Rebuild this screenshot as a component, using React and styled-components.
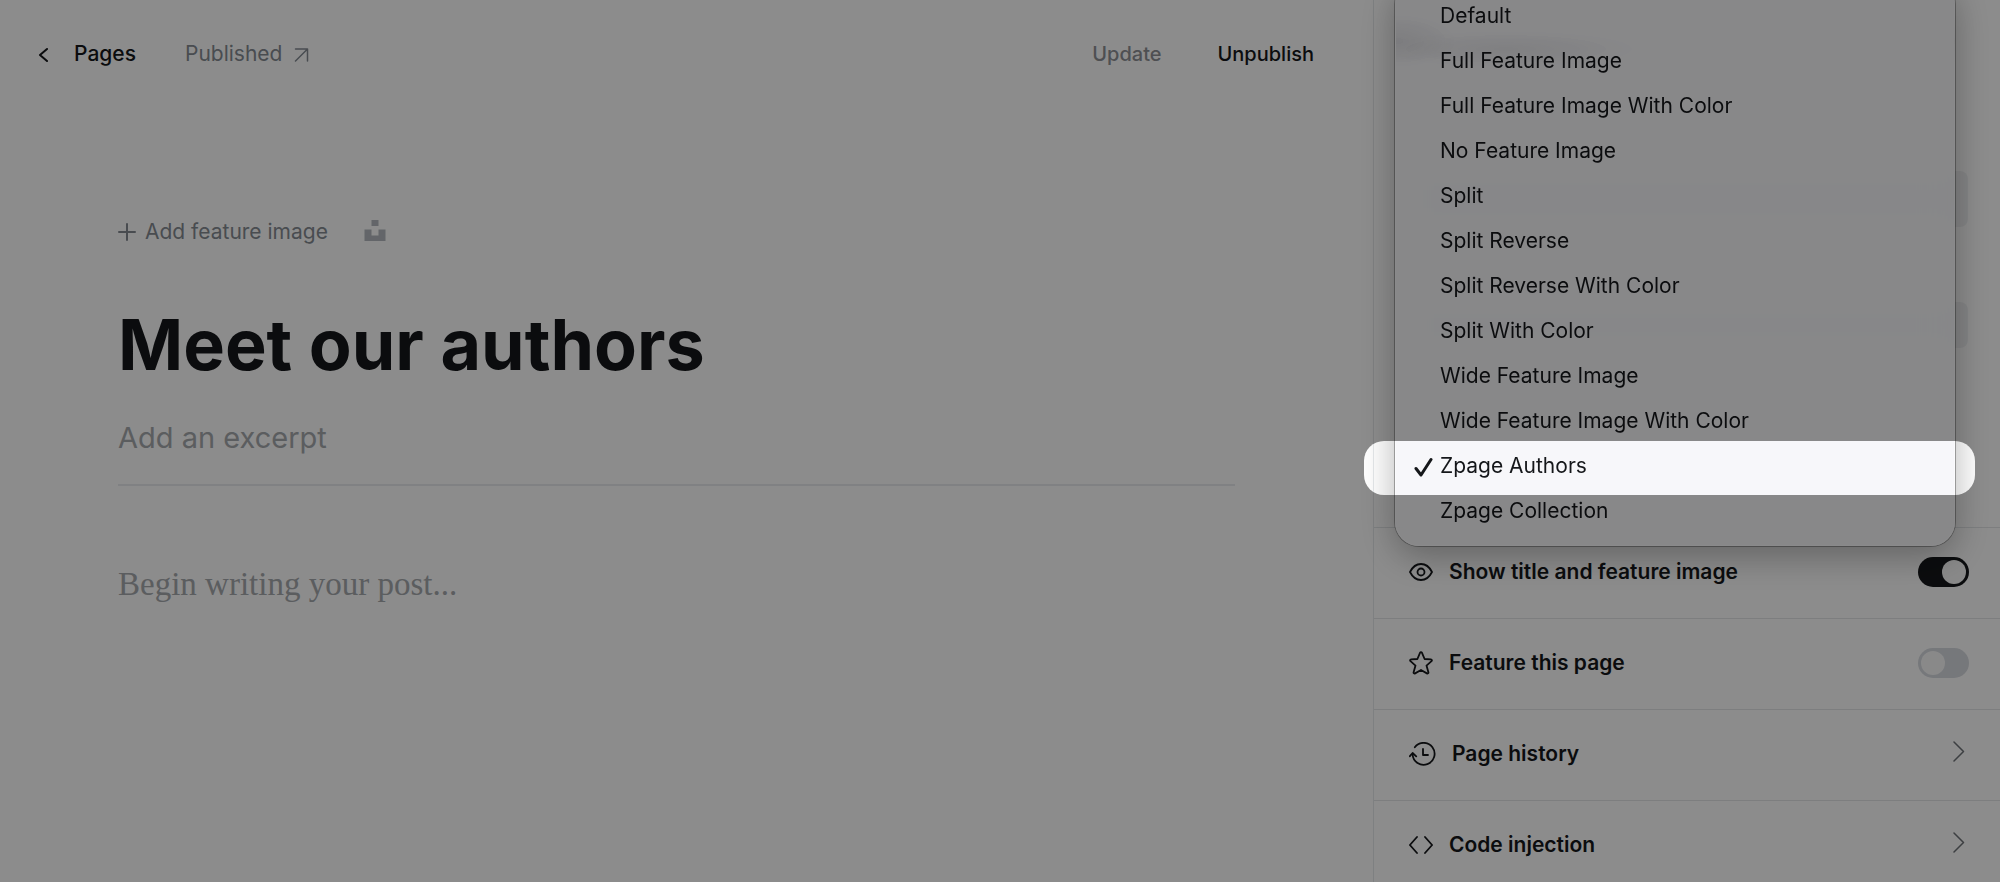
import React, { useState } from 'react'
import styled, { createGlobalStyle } from 'styled-components'

const GlobalStyle = createGlobalStyle`
  * {
    box-sizing: border-box;
  }

  body {
    margin: 0;
    background: #fff;
    color: #15171a;
    font-family: Inter, "Liberation Sans", sans-serif;
    font-size: 21px;
    line-height: 30px;
  }

  button, input, textarea {
    font: inherit;
    color: inherit;
  }
`

const Layout = styled.div`
  display: flex;
  height: 100vh;
  overflow: hidden;
`

const Editor = styled.main`
  flex: 1;
  min-width: 0;
`

const Toolbar = styled.header`
  display: flex;
  align-items: center;
  justify-content: space-between;
  padding: 39px 59px 0 37px;
`

const ToolbarGroup = styled.div`
  display: flex;
  align-items: center;
  gap: ${props => props.$gap}px;
`

const BackLink = styled.a`
  display: flex;
  align-items: center;
  gap: 24px;
  color: #15171a;
  font-weight: 500;
  text-decoration: none;
`

const StatusLink = styled.a`
  display: flex;
  align-items: center;
  gap: 12px;
  color: #858b93;
  text-decoration: none;
`

const TextButton = styled.button`
  padding: 0;
  border: 0;
  background: none;
  color: ${props => (props.$muted ? '#8e9196' : '#15171a')};
  font-size: 20px;
  font-weight: 500;
  cursor: pointer;
`

const Canvas = styled.div`
  padding: 148px 138px 0 118px;
`

const FeatureImageBar = styled.div`
  display: flex;
  align-items: center;
  gap: 36px;
`

const AddImage = styled.button`
  display: flex;
  align-items: center;
  gap: 9px;
  padding: 0;
  border: 0;
  background: none;
  color: #858b93;
  cursor: pointer;
`

const IconButton = styled.button`
  display: flex;
  padding: 0;
  border: 0;
  background: none;
  color: #b4b9bf;
  cursor: pointer;
`

const TitleInput = styled.input`
  display: block;
  width: 100%;
  margin-top: 52px;
  padding: 0;
  border: 0;
  outline: 0;
  background: none;
  font-size: 70px;
  font-weight: 700;
  line-height: 92px;
`

const ExcerptInput = styled.input`
  display: block;
  width: 100%;
  height: 95px;
  padding: 0;
  border: 0;
  border-bottom: 2px solid #eaecee;
  outline: 0;
  background: none;
  font-size: 29px;

  &::placeholder {
    color: #a6a9ad;
    opacity: 1;
  }
`

const BodyInput = styled.textarea`
  display: block;
  width: 100%;
  margin-top: 76px;
  padding: 0;
  border: 0;
  outline: 0;
  resize: none;
  background: none;
  font-family: "Liberation Serif", serif;
  font-size: 33px;
  line-height: 44px;

  &::placeholder {
    color: #a6a9ad;
    opacity: 1;
  }
`

const Sidebar = styled.aside`
  position: relative;
  flex: 0 0 627px;
  border-left: 1px solid #e6e9eb;
`

const Fields = styled.div`
  display: grid;
  align-content: start;
  gap: 75px;
  height: 527px;
  padding: 171px 32px 0 35px;
`

const Field = styled.input`
  width: 100%;
  height: ${props => props.$height}px;
  padding: 0 16px;
  border: 0;
  border-radius: 8px;
  background: #f0f1f3;
`

const Settings = styled.div`
  display: flex;
  flex-direction: column;
`

const settingRow = `
  display: flex;
  align-items: center;
  width: 100%;
  height: 91px;
  padding: 0 31px 2px 35px;
  border: 0;
  border-top: 1px solid #e3e6e8;
  background: none;
  font-weight: 600;
  text-align: left;
  cursor: pointer;
`

const ToggleRow = styled.label`
  ${settingRow}
`

const LinkRow = styled.button`
  ${settingRow}
`

const RowText = styled.span`
  flex: 1;
  margin-left: 16px;
`

const Switch = styled.input`
  display: flex;
  align-items: center;
  width: 51px;
  height: 30px;
  margin: 0;
  padding: 3px;
  appearance: none;
  border-radius: 15px;
  background: #d7dae0;
  cursor: pointer;

  &::before {
    content: "";
    width: 24px;
    height: 24px;
    border-radius: 50%;
    background: #f9fafa;
  }

  &:checked {
    justify-content: flex-end;
    background: #15171a;
  }
`

const Menu = styled.ul`
  position: absolute;
  top: -20px;
  left: 21px;
  right: 45px;
  margin: 0;
  padding: 12px 0;
  border: 1px solid rgba(255, 255, 255, 0.6);
  border-radius: 24px;
  background:
    radial-gradient(ellipse 130px 18px at 110px 68px, rgba(0, 0, 10, 0.06), transparent),
    radial-gradient(ellipse 60px 26px at 0 60px, rgba(0, 0, 10, 0.08), transparent),
    rgba(246, 246, 249, 0.86);
  box-shadow: 0 0 0 1px rgba(0, 0, 0, 0.3), 0 10px 36px rgba(0, 0, 0, 0.3);
  backdrop-filter: blur(16px);
  list-style: none;
`

const Option = styled.li`
  display: grid;
  grid-template-columns: 26px 1fr;
  align-items: center;
  height: 45px;
  padding-left: 18px;
  color: #15171a;
  cursor: default;

  /* everything but the picked option is dimmed */
  &[aria-selected="true"] {
    position: relative;
  }

  &[aria-selected="true"]::after {
    content: "";
    position: absolute;
    inset: -2px -21px -7px -32px;
    border-radius: 20px;
    box-shadow: 0 0 0 3000px rgba(0, 0, 0, 0.45);
    pointer-events: none;
  }
`

const OptionText = styled.span`
  grid-column: 2;
`

const Stroke = ({ w, h, width = 2, children }) => (
  <svg width={w} height={h} viewBox={`0 0 ${w} ${h}`} fill="none" stroke="currentColor" strokeWidth={width} strokeLinecap="round" strokeLinejoin="round" aria-hidden="true">
    {children}
  </svg>
)

const BackIcon = () => <Stroke w={13} h={16}><path d="M10 3L3 9 10 15" /></Stroke>
const ArrowIcon = () => <Stroke w={15} h={15} width={1.5}><path d="M1.5 2h12v12M13.5 2l-12 12" /></Stroke>
const PlusIcon = () => <Stroke w={18} h={18}><path d="M9 1v16M1 9h16" /></Stroke>
const CheckIcon = () => <Stroke w={20} h={22} width={3}><path d="M2 13.500l5 6.500L17 4.500" /></Stroke>
const ChevronIcon = () => <Stroke w={16} h={26} width={1.5}><path d="M1 1l9.500 9.500L1 20" stroke="#6f7378" /></Stroke>

const UnsplashIcon = () => (
  <svg width="22" height="24" viewBox="0 0 22 24" fill="currentColor" aria-hidden="true">
    <path d="M7.500 0h7v6h-7zM.5 9.500h7v6h7v-6h7V21H.5z" />
  </svg>
)

const EyeIcon = () => (
  <Stroke w={24} h={24} width={1.8}>
    <path d="M1 12C3.500 7 7.500 4 12 4s8.500 3 11 8c-2.500 5-6.500 8-11 8S3.500 17 1 12z" />
    <circle cx="12" cy="12" r="3.500" />
  </Stroke>
)

const StarIcon = () => (
  <Stroke w={24} h={24} width={1.8}>
    <path d="M12.900 1.700l2.700 6.300 6.300.4c1 .1 1.300 1.100.6 1.700l-5 4.500 1.900 6.700c.2.900-.7 1.600-1.500 1.100L12 19l-5.900 3.400c-.8.500-1.700-.2-1.500-1.100l1.900-6.700-5-4.500c-.7-.6-.4-1.600.6-1.700L8.400 8l2.700-6.300c.4-.8 1.400-.8 1.800 0z" />
  </Stroke>
)

const HistoryIcon = () => (
  <Stroke w={27} h={24} width={1.8}>
    <path d="M5.800 5.200A11 11 0 1 1 3.600 12.500" />
    <path d="M.9 14.200l2.700-3.200 3.600 3.400" />
    <path d="M14 7v6h5" />
  </Stroke>
)

const CodeIcon = () => <Stroke w={24} h={24} width={1.8}><path d="M8 4L.9 12 8 20M16 4l7.100 8L16 20" /></Stroke>

const templates = [
  'Default',
  'Full Feature Image',
  'Full Feature Image With Color',
  'No Feature Image',
  'Split',
  'Split Reverse',
  'Split Reverse With Color',
  'Split With Color',
  'Wide Feature Image',
  'Wide Feature Image With Color',
  'Zpage Authors',
  'Zpage Collection',
]

const TemplateMenu = () => (
  <Menu role="listbox" aria-label="Template">
    {templates.map(name => {
      const selected = name === 'Zpage Authors'
      return (
        <Option key={name} role="option" aria-selected={selected}>
          {selected && <CheckIcon />}
          <OptionText>{name}</OptionText>
        </Option>
      )
    })}
  </Menu>
)

export default function App() {
  const [title, setTitle] = useState('Meet our authors')

  return (
    <>
      <GlobalStyle />
      <Layout>
        <Editor>
          <Toolbar>
            <ToolbarGroup $gap={49}>
              <BackLink href="#pages"><BackIcon />Pages</BackLink>
              <StatusLink href="#published">Published<ArrowIcon /></StatusLink>
            </ToolbarGroup>
            <ToolbarGroup $gap={56}>
              <TextButton type="button" $muted>Update</TextButton>
              <TextButton type="button">Unpublish</TextButton>
            </ToolbarGroup>
          </Toolbar>
          <Canvas>
            <FeatureImageBar>
              <AddImage type="button"><PlusIcon />Add feature image</AddImage>
              <IconButton type="button" aria-label="Unsplash"><UnsplashIcon /></IconButton>
            </FeatureImageBar>
            <TitleInput aria-label="Page title" value={title} onChange={e => setTitle(e.target.value)} />
            <ExcerptInput aria-label="Excerpt" placeholder="Add an excerpt" />
            <BodyInput aria-label="Post body" placeholder="Begin writing your post..." />
          </Canvas>
        </Editor>
        <Sidebar>
          <Fields>
            <Field aria-label="Tags" $height={56} />
            <Field aria-label="Page access" $height={46} />
          </Fields>
          <Settings>
            <ToggleRow>
              <EyeIcon />
              <RowText>Show title and feature image</RowText>
              <Switch type="checkbox" defaultChecked />
            </ToggleRow>
            <ToggleRow>
              <StarIcon />
              <RowText>Feature this page</RowText>
              <Switch type="checkbox" />
            </ToggleRow>
            <LinkRow type="button">
              <HistoryIcon />
              <RowText>Page history</RowText>
              <ChevronIcon />
            </LinkRow>
            <LinkRow type="button">
              <CodeIcon />
              <RowText>Code injection</RowText>
              <ChevronIcon />
            </LinkRow>
          </Settings>
          <TemplateMenu />
        </Sidebar>
      </Layout>
    </>
  )
}
